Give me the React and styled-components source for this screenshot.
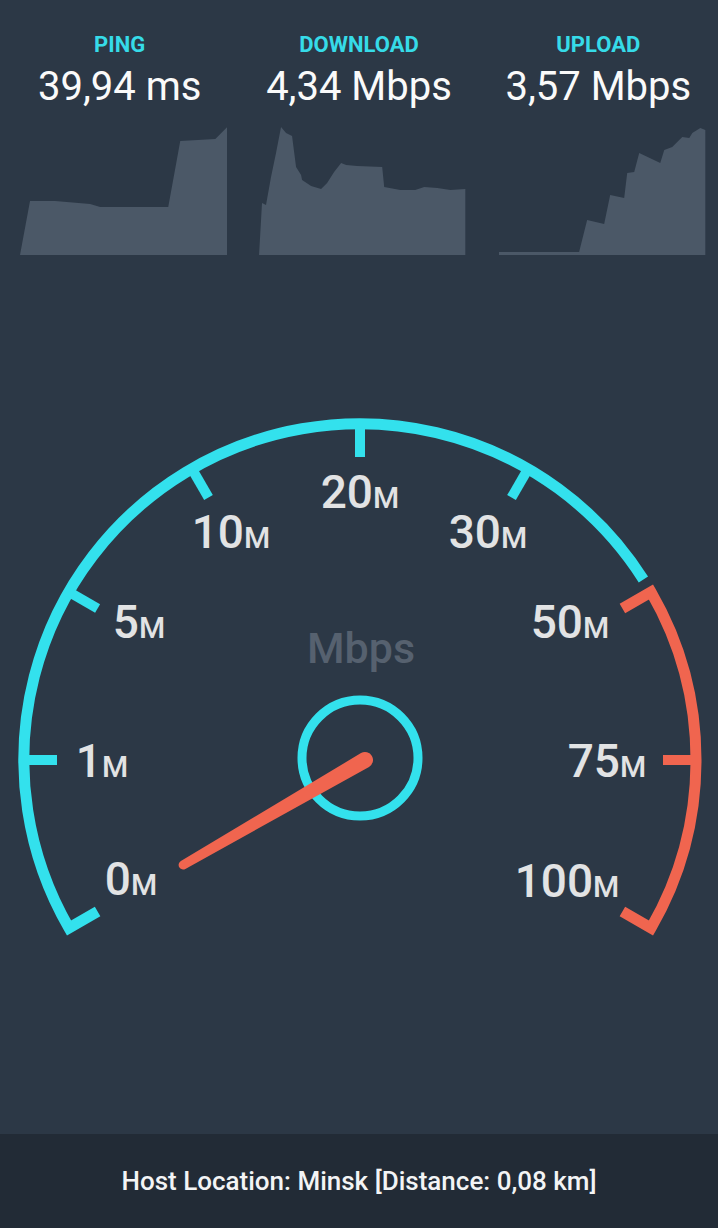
import styled, { createGlobalStyle } from "styled-components"

const CYAN = "#33e1ed"
const RED = "#f0654f"

const GlobalStyle = createGlobalStyle`
  html, body {
    margin: 0;
    padding: 0;
    background: #2c3846;
  }
  body {
    font-family: Roboto, "Noto Sans", sans-serif;
  }
`

const Screen = styled.div`
  width: 718px;
  height: 1228px;
  display: flex;
  flex-direction: column;
  background: #2c3846;
  overflow: hidden;
`
const Stats = styled.header`
  display: grid;
  grid-template-columns: repeat(3, 1fr);
  padding-top: 32px;
`
const Stat = styled.div`
  display: flex;
  flex-direction: column;
  align-items: center;
`
const StatLabel = styled.span`
  color: #36dbe8;
  font-size: 22px;
  font-weight: 700;
  line-height: 26px;
`
const StatValue = styled.span`
  margin-top: 6px;
  color: #fafafa;
  font-size: 40px;
  line-height: 46px;
`
const Chart = styled.svg`
  display: block;
  align-self: stretch;
  height: 130px;
  margin: 15px 12px 0 20px;
`
const GaugeArea = styled.main`
  flex: 1;
  display: flex;
  justify-content: center;
`
const Dial = styled.svg`
  display: block;
  width: 718px;
  height: 879px;
`
const TickLabel = styled.text`
  font-family: Roboto, "Noto Sans", sans-serif;
  font-size: 46px;
  font-weight: 500;
  fill: #e2e3e4;
  text-anchor: middle;
`
const Unit = styled.tspan`
  font-size: 30px;
`
const Caption = styled.text`
  font-family: Roboto, "Noto Sans", sans-serif;
  font-size: 43px;
  font-weight: 500;
  fill: #56616f;
  text-anchor: middle;
`
const Footer = styled.footer`
  height: 94px;
  background: #222b36;
  display: flex;
  align-items: center;
  justify-content: center;
  color: #f3f4f5;
  font-size: 26px;
  font-weight: 500;
`

// area charts, local coords of a 207x130 box
const stats = [
  {
    label: "PING",
    value: "39,94 ms",
    points: [[0,130],[10,76],[35,76],[70,79],[80,82],[148,82],[160,16],[195,14],[207,2],[207,130]],
  },
  {
    label: "DOWNLOAD",
    value: "4,34 Mbps",
    points: [[0,131],[3,78],[7,80],[12,52],[17,28],[22,2],[27,8],[33,11],[37,42],[42,50],[43,55],[52,61],[62,64],[68,58],[75,47],[82,38],[87,40],[98,41],[123,42],[125,62],[141,65],[156,65],[165,62],[178,63],[191,65],[206,64],[206,130]],
  },
  {
    label: "UPLOAD",
    value: "3,57 Mbps",
    points: [[0,127],[80,127],[88,95],[105,99],[111,70],[125,73],[128,48],[135,47],[140,28],[161,38],[165,25],[173,22],[178,17],[183,12],[190,13],[193,8],[201,3],[206,5],[206,130],[0,130]],
  },
]

const CX = 360
const CY = 760
const R = 336
const R_IN = 303

const polar = (r, deg) => {
  const a = (deg * Math.PI) / 180
  return [CX + r * Math.cos(a), CY - r * Math.sin(a)]
}
const pt = ([x, y]) => `${x.toFixed(1)} ${y.toFixed(1)}`

const cyanArc = `M ${pt(polar(R_IN, 210))} L ${pt(polar(R, 210))} A ${R} ${R} 0 0 1 ${pt(polar(R, 32.5))}`
const redArc = `M ${pt(polar(R_IN, 30))} L ${pt(polar(R, 30))} A ${R} ${R} 0 0 1 ${pt(polar(R, -30))} L ${pt(polar(R_IN, -30))}`

const ticks = [
  { deg: 180, color: CYAN },
  { deg: 150, color: CYAN },
  { deg: 120, color: CYAN },
  { deg: 90, color: CYAN },
  { deg: 60, color: CYAN },
  { deg: 0, color: RED },
]

const labels = [
  { text: "0", x: 131, y: 895 },
  { text: "1", x: 102, y: 777 },
  { text: "5", x: 139, y: 638 },
  { text: "10", x: 231, y: 548 },
  { text: "20", x: 360, y: 508 },
  { text: "30", x: 488, y: 548 },
  { text: "50", x: 570, y: 638 },
  { text: "75", x: 607, y: 777 },
  { text: "100", x: 567, y: 897 },
]

const App = () => {
  return (
    <Screen>
      <GlobalStyle />
      <Stats>
        {stats.map((s) => (
          <Stat key={s.label}>
            <StatLabel>{s.label}</StatLabel>
            <StatValue>{s.value}</StatValue>
            <Chart viewBox="0 0 207 130" preserveAspectRatio="none">
              <polygon points={s.points.map((p) => p.join(",")).join(" ")} fill="#4b5867" />
            </Chart>
          </Stat>
        ))}
      </Stats>

      <GaugeArea>
        <Dial viewBox="0 255 718 879">
          <path d={cyanArc} fill="none" stroke={CYAN} strokeWidth="11" strokeLinejoin="miter" />
          <path d={redArc} fill="none" stroke={RED} strokeWidth="11" strokeLinejoin="miter" />
          {ticks.map((t) => {
            const [x1, y1] = polar(R, t.deg)
            const [x2, y2] = polar(R_IN, t.deg)
            return <line key={t.deg} x1={x1} y1={y1} x2={x2} y2={y2} stroke={t.color} strokeWidth="10" />
          })}
          {labels.map((l) => (
            <TickLabel key={l.text} x={l.x} y={l.y}>
              {l.text}
              <Unit>M</Unit>
            </TickLabel>
          ))}
          <Caption x="361" y="663">Mbps</Caption>
          <circle cx="360" cy="758" r="58" fill="none" stroke={CYAN} strokeWidth="9" />
          <path
            d="M 0 -8 L -210 -4.5 A 4.5 4.5 0 0 0 -210 4.5 L 0 8 A 8 8 0 0 0 0 -8 Z"
            fill={RED}
            transform="translate(365 760) rotate(-30)"
          />
        </Dial>
      </GaugeArea>

      <Footer>Host Location: Minsk [Distance: 0,08 km]</Footer>
    </Screen>
  )
}

export default App
